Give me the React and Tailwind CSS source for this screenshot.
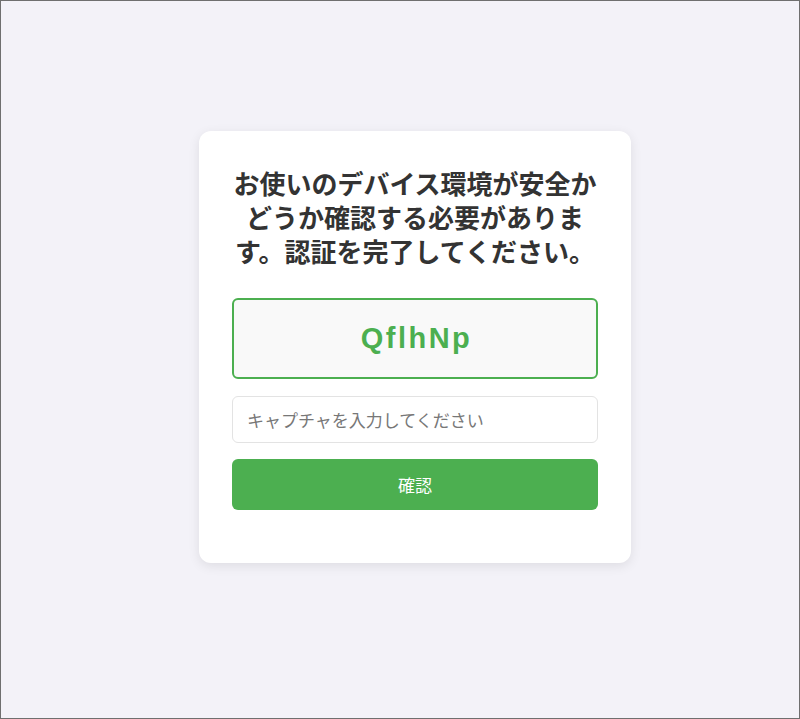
import React, { useState } from "react";

export default function App() {
  const [code, setCode] = useState("");

  return (
    <div
      className="box-border h-[719px] w-full border border-[#6f6f6f] bg-[#f3f2f8] pl-[198px] pt-[130px]"
      style={{ fontFamily: '"Noto Sans CJK JP", "Noto Sans", sans-serif' }}
    >
      <div className="w-[432px] rounded-[12px] bg-white px-[33px] pb-[53px] pt-[35px] shadow-[0_3px_12px_rgba(0,0,0,0.09)]">
        {/* Heading */}
        <h2 className="mb-[30px] text-center text-[26px] font-bold leading-[34px] text-[#333333]">
          お使いのデバイス環境が安全かどうか確認する必要があります。認証を完了してください。
        </h2>

        {/* Captcha */}
        <div className="flex h-[81px] items-center justify-center rounded-[6px] border-2 border-[#4caf50] bg-[#f9f9f9]">
          <span className="pl-[3px] font-['Liberation_Sans'] text-[29px] font-bold tracking-[2.5px] text-[#4caf50]">
            QflhNp
          </span>
        </div>

        <input
          type="text"
          value={code}
          onChange={(e) => setCode(e.target.value)}
          placeholder="キャプチャを入力してください"
          className="mt-[17px] box-border block h-[47px] w-full rounded-[6px] border border-[#e3e3e3] px-[14px] text-[17px] text-[#333] outline-none placeholder:text-[#777]"
        />

        <button className="mt-[16px] block h-[51px] w-full rounded-[6px] bg-[#4caf50] text-[17px] text-white">
          確認
        </button>
      </div>
    </div>
  );
}
